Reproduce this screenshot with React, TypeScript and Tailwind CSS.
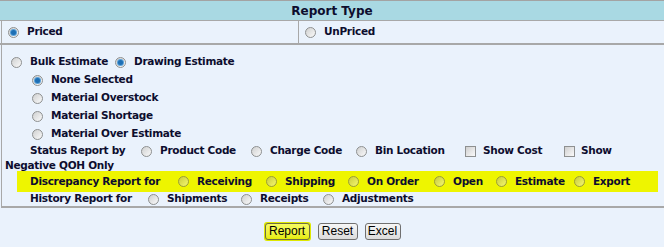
import React from 'react';

const Radio = ({ checked = false, yellow = false }: { checked?: boolean; yellow?: boolean }) => (
    <span
        className={
            'relative inline-block w-[11px] h-[11px] shrink-0 rounded-full border ' +
            (yellow
                ? 'border-[#9a9c3a] bg-gradient-to-br from-[#c9cc3a] to-[#f4f770]'
                : 'border-[#8e9090] bg-gradient-to-br from-[#cfd0d0] to-[#fafafa]')
        }
    >
        {checked && (
            <span className="absolute left-[2px] top-[2px] w-[5px] h-[5px] rounded-full bg-[#1d6fb5] ring-1 ring-[#5aa0d8]" />
        )}
    </span>
);

const Check = () => (
    <span className="inline-block w-[11px] h-[11px] shrink-0 border border-[#8e9090] bg-gradient-to-br from-[#d0d0d0] to-[#fafafa]" />
);

const Opt = ({ label, checked, yellow, className }: { label: string; checked?: boolean; yellow?: boolean; className?: string }) => (
    <span className={'flex items-center ' + (className ?? '')}>
        <Radio checked={checked} yellow={yellow} />
        <span className="ml-[8px] whitespace-nowrap">{label}</span>
    </span>
);

export default function App() {
    return (
        <div className="w-[664px] h-[247px] bg-[#eaf2fc] font-['DejaVu_Sans',sans-serif] text-[10.5px] tracking-[-0.3px] font-bold text-[#0d0d2e] overflow-hidden">
            {/* header */}
            <div className="border-t border-[#a3a3a3] bg-[#a9d9e3] h-[20px] flex items-center justify-center text-[12px] tracking-normal">
                Report Type
            </div>

            {/* priced / unpriced */}
            <div className="flex h-[25px] border-t border-b-2 border-[#a8a8a8]">
                <div className="w-[298px] border-l border-r border-[#a8a8a8] ml-px flex items-center pl-[6px]">
                    <Opt label="Priced" checked />
                </div>
                <div className="flex-1 flex items-center pl-[6px]">
                    <Opt label="UnPriced" />
                </div>
            </div>

            {/* options */}
            <div className="ml-px border-l border-b-2 border-[#a8a8a8] h-[163px] pt-[9px]">
                <div className="flex items-center h-[16px] pl-[9px]">
                    <Opt label="Bulk Estimate" className="mr-[7px]" />
                    <Opt label="Drawing Estimate" checked />
                </div>
                <div className="mt-[1px] pl-[30px]">
                    <div className="flex items-center h-[18px]"><Opt label="None Selected" checked /></div>
                    <div className="flex items-center h-[18px]"><Opt label="Material Overstock" /></div>
                    <div className="flex items-center h-[18px]"><Opt label="Material Shortage" /></div>
                    <div className="flex items-center h-[18px]"><Opt label="Material Over Estimate" /></div>
                </div>
                <div className="flex items-center h-[16px] pl-[28px]">
                    <span className="w-[111px]">Status Report by</span>
                    <Opt label="Product Code" className="w-[110px]" />
                    <Opt label="Charge Code" className="w-[105px]" />
                    <Opt label="Bin Location" className="w-[109px]" />
                    <span className="flex items-center w-[99px]">
                        <Check />
                        <span className="ml-[7px]">Show Cost</span>
                    </span>
                    <span className="flex items-center">
                        <Check />
                        <span className="ml-[6px]">Show</span>
                    </span>
                </div>
                <div className="h-[12px] leading-[12px] pl-[3px]">Negative QOH Only</div>
                <div className="ml-[15px] mr-[6px] h-[21px] bg-[#eef500] flex items-center pl-[13px]">
                    <span className="w-[148px]">Discrepancy Report for</span>
                    <Opt label="Receiving" yellow className="w-[88px]" />
                    <Opt label="Shipping" yellow className="w-[82px]" />
                    <Opt label="On Order" yellow className="w-[86px]" />
                    <Opt label="Open" yellow className="w-[62px]" />
                    <Opt label="Estimate" yellow className="w-[78px]" />
                    <Opt label="Export" yellow />
                </div>
                <div className="flex items-center h-[14px] pl-[28px]">
                    <span className="w-[118px]">History Report for</span>
                    <Opt label="Shipments" className="w-[93px]" />
                    <Opt label="Receipts" className="w-[82px]" />
                    <Opt label="Adjustments" />
                </div>
            </div>

            {/* buttons */}
            <div className="flex justify-center gap-[7px] mt-[14px] font-['Liberation_Sans',sans-serif] font-normal text-[12px] tracking-normal text-black">
                <span className="rounded-[3px] p-px bg-[#dfe800]">
                    <button className="block h-[17px] w-[45px] rounded-[3px] border border-[#6f6f45] bg-gradient-to-b from-[#f7fb60] to-[#e6ed00] leading-[15px]">
                        Report
                    </button>
                </span>
                <button className="h-[17px] mt-px w-[40px] rounded-[3px] border border-[#707070] bg-gradient-to-b from-[#f6f6f6] to-[#dcdcdc] leading-[15px]">
                    Reset
                </button>
                <button className="h-[17px] mt-px w-[36px] rounded-[3px] border border-[#707070] bg-gradient-to-b from-[#f6f6f6] to-[#dcdcdc] leading-[15px]">
                    Excel
                </button>
            </div>
        </div>
    );
}
